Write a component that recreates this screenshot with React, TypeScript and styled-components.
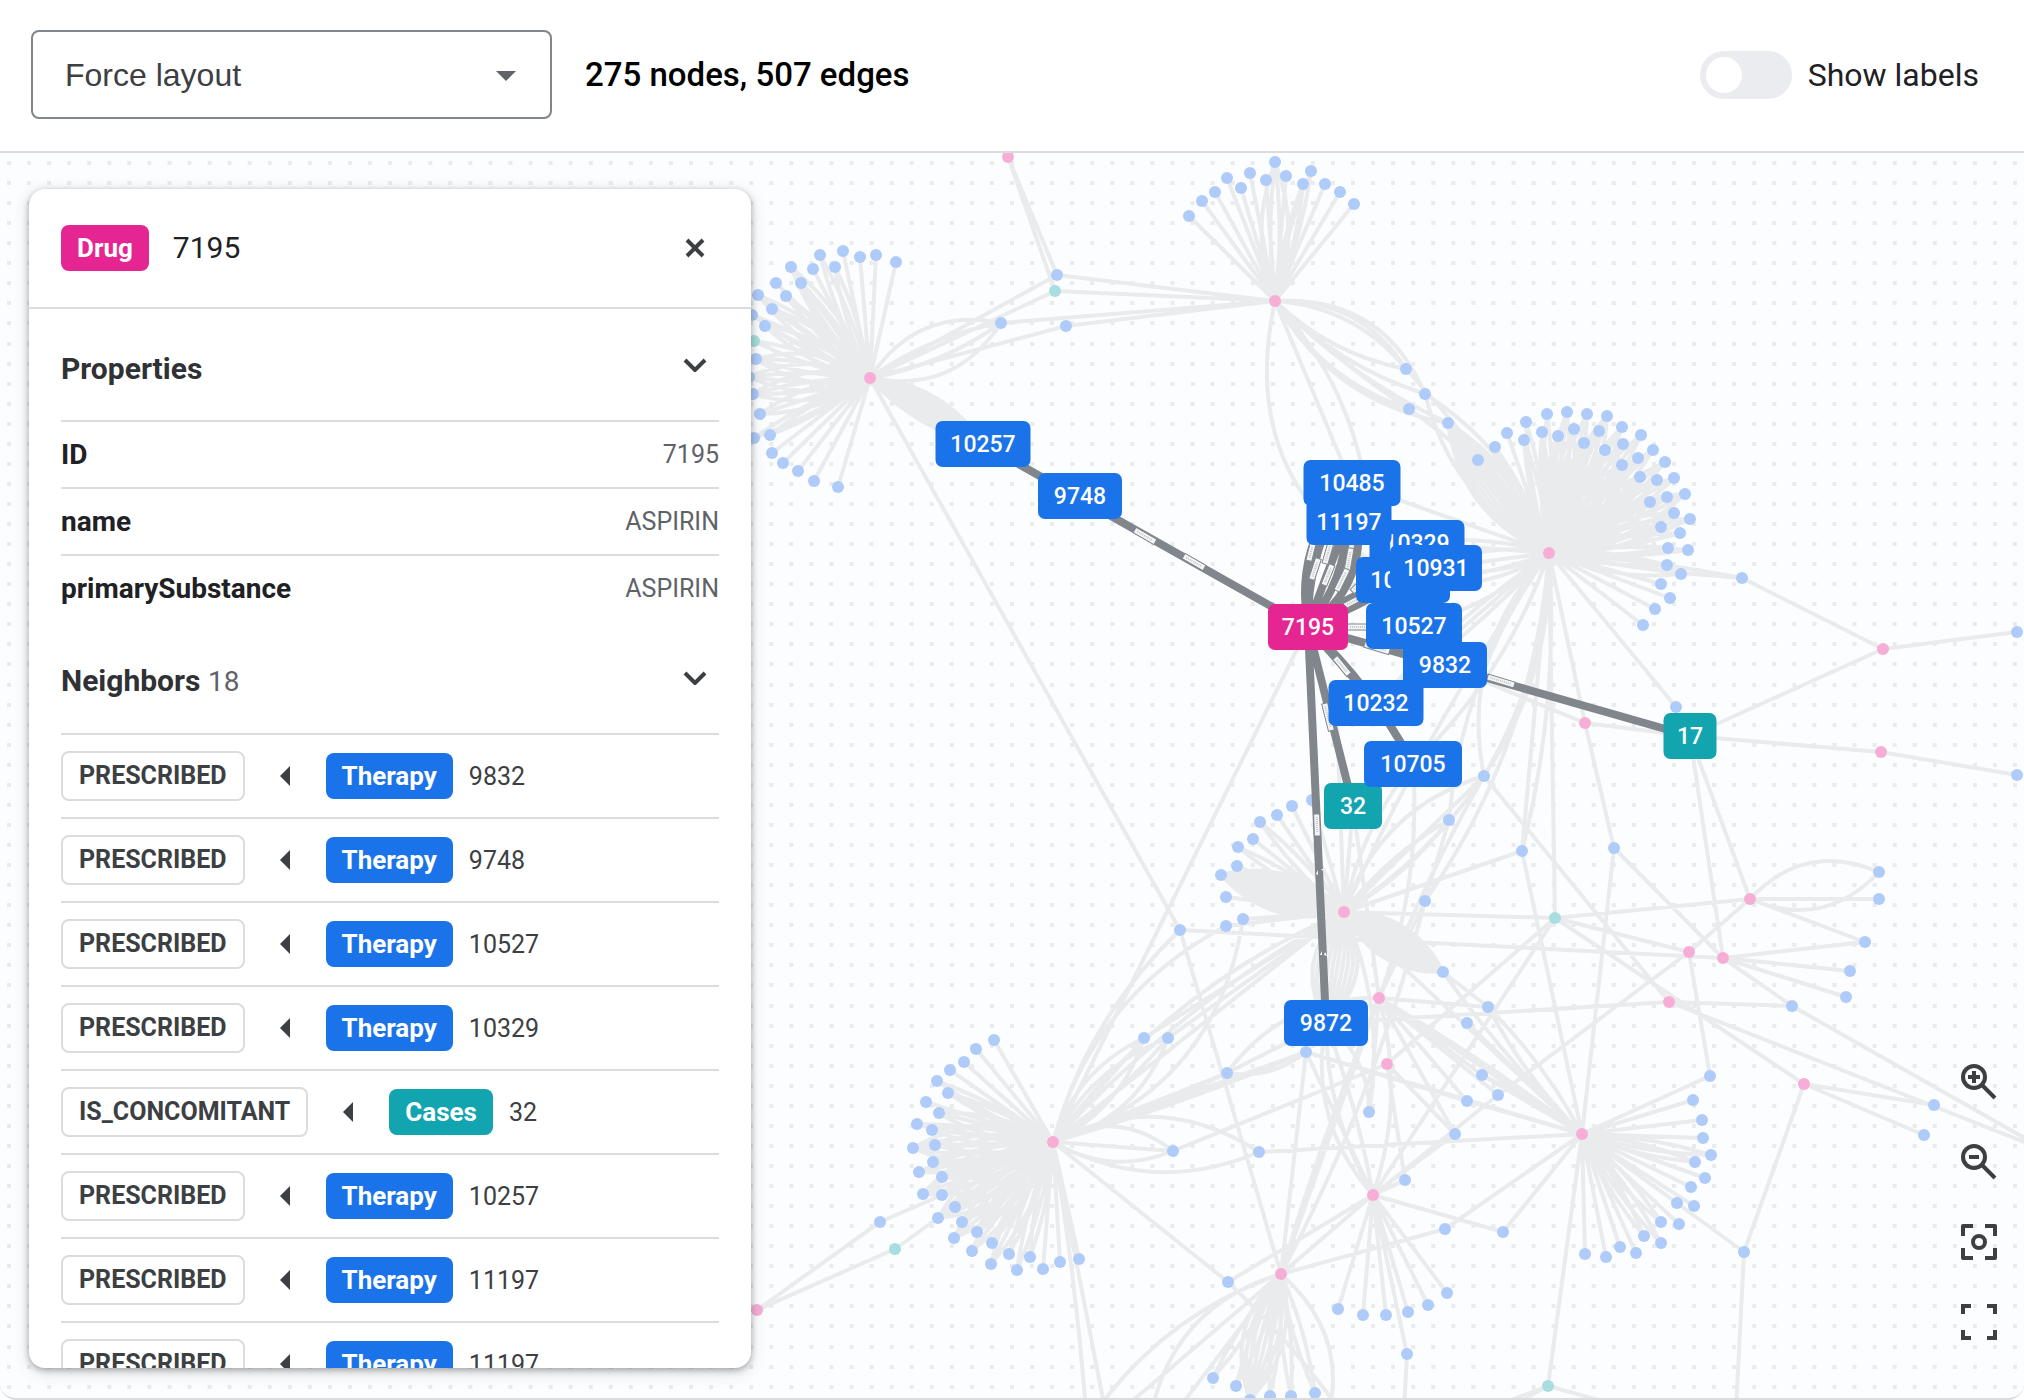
import React, { useState } from "react";
import styled, { createGlobalStyle } from "styled-components";

const GlobalStyle = createGlobalStyle`
  *, *::before, *::after { box-sizing: border-box; }
  body {
    margin: 0;
    background: #ffffff;
    color: #202124;
    font-family: Roboto, "Noto Sans", sans-serif;
  }
`;

const Page = styled.div`
  display: flex;
  flex-direction: column;
  height: 100vh;
  overflow: hidden;
`;

const Toolbar = styled.header`
  display: flex;
  align-items: center;
  gap: 33px;
  padding: 30px 45px 32px 31px;
  border-bottom: 2px solid #dadce0;
`;

const SelectBox = styled.div`
  position: relative;
  width: 521px;
`;

const LayoutSelect = styled.select`
  appearance: none;
  display: block;
  width: 100%;
  height: 89px;
  padding: 0 64px 0 32px;
  border: 2px solid #80868b;
  border-radius: 8px;
  background: #ffffff;
  color: #3c4043;
  font-family: "Liberation Sans", Arial, sans-serif;
  font-size: 32px;
`;

const SelectArrow = styled.svg`
  position: absolute;
  right: 36px;
  top: 41px;
  pointer-events: none;
`;

const Counts = styled.p`
  flex: 1;
  margin: 0;
  color: #000000;
  font-size: 33px;
  font-weight: 500;
  line-height: 40px;
`;

const SwitchLabel = styled.label`
  display: flex;
  align-items: center;
  gap: 16px;
  font-size: 32px;
  line-height: 40px;
`;

const Switch = styled.input`
  appearance: none;
  display: flex;
  align-items: center;
  width: 92px;
  height: 48px;
  margin: 0;
  padding: 6px;
  border-radius: 24px;
  background: #ebecf0;

  &::before {
    content: "";
    width: 36px;
    height: 36px;
    border-radius: 50%;
    background: #ffffff;
  }

  &:checked {
    justify-content: flex-end;
    background: #1a73e8;
  }
`;

const Canvas = styled.main`
  position: relative;
  flex: 1;
  min-height: 0;
  overflow: hidden;
  border-bottom: 2px solid #dadce0;
  border-radius: 0 0 16px 16px;
  background: #fcfdff;
`;

const GraphSvg = styled.svg`
  display: block;
  width: 100%;
  height: 100%;

  text {
    fill: #ffffff;
    font-size: 23px;
    font-weight: 500;
    text-anchor: middle;
  }
`;

const Panel = styled.aside`
  position: absolute;
  top: 36px;
  bottom: 30px;
  left: 29px;
  width: 722px;
  overflow: hidden;
  border-radius: 16px;
  background: #ffffff;
  box-shadow: 0 2px 6px rgba(60, 64, 67, 0.4), 0 4px 16px rgba(60, 64, 67, 0.18);
`;

const PanelHeader = styled.div`
  display: flex;
  align-items: center;
  gap: 24px;
  height: 120px;
  padding: 0 32px;
  border-bottom: 2px solid #dadce0;
`;

const PanelTitle = styled.h1`
  flex: 1;
  margin: 0;
  font-size: 30px;
  font-weight: 400;
  line-height: 40px;
`;

const IconButton = styled.button`
  display: flex;
  align-items: center;
  justify-content: center;
  width: 48px;
  height: 48px;
  padding: 0;
  border: 0;
  background: none;
  color: #3c4043;
`;

const PanelBody = styled.div`
  padding: 0 32px;
`;

const SectionToggle = styled.button`
  display: flex;
  align-items: center;
  justify-content: space-between;
  width: 100%;
  height: 111px;
  padding: 0 12px 0 0;
  border: 0;
  background: none;
  color: #303134;
  font-family: inherit;
  font-size: 30px;
  font-weight: 700;
  line-height: 36px;
`;

const SectionTitle = styled.span`
  padding-top: 8px;
`;

const Count = styled.span`
  color: #5f6368;
  font-size: 28px;
  font-weight: 400;
`;

const PropertyTable = styled.table`
  width: 100%;
  border-collapse: collapse;
  font-size: 28px;
  line-height: 32px;
`;

const PropertyRow = styled.tr`
  height: 67px;
  border-top: 2px solid #dadce0;
`;

const PropertyName = styled.th`
  padding: 0;
  text-align: left;
  font-weight: 700;
`;

const PropertyValue = styled.td`
  padding: 0;
  color: #5f6368;
  font-size: 25px;
  text-align: right;
`;

const NeighborList = styled.ul`
  margin: 0;
  padding: 0;
  list-style: none;
`;

const NeighborRow = styled.li`
  display: flex;
  align-items: center;
  height: 84px;
  border-top: 2px solid #dadce0;
  color: #3c4043;
  font-size: 25px;
`;

const EdgeChip = styled.span`
  padding: 0 16px;
  border: 2px solid #dadce0;
  border-radius: 8px;
  font-size: 25px;
  font-weight: 700;
  line-height: 46px;
`;

const DirectionArrow = styled.svg`
  margin: 0 36px 0 35px;
`;

const Badge = styled.span<{ $tone: Tone }>`
  padding: 0 16px;
  border-radius: 8px;
  background: ${(p) => TONES[p.$tone].solid};
  color: #ffffff;
  font-size: 26px;
  font-weight: 700;
  line-height: 46px;
`;

const NeighborId = styled.span`
  margin-left: 16px;
`;

const Controls = styled.div`
  position: absolute;
  right: 21px;
  bottom: 52px;
  display: flex;
  flex-direction: column;
  gap: 32px;
`;

type Tone = "drug" | "therapy" | "cases";
type Point = [number, number];
type Leaf = [number, number, number?];

const TONES: Record<Tone, { solid: string; faded: string }> = {
  drug: { solid: "#e52592", faded: "#f7aed6" },
  therapy: { solid: "#1a73e8", faded: "#aecbfa" },
  cases: { solid: "#12a4af", faded: "#a8dee0" },
};

/* Hubs of the graph. */
const H1: Point = [870, 378];
const H2: Point = [1275, 301];
const H3: Point = [1549, 553];
const H4: Point = [1053, 1142];
const H5: Point = [1582, 1134];
const P1: Point = [1344, 912];
const P2: Point = [1379, 998];
const P3: Point = [1387, 1064];
const P4: Point = [1373, 1195];
const P5: Point = [1281, 1274];

/* Leaves around a hub; the third value is the number of parallel edges. */
const FANS: { hub: Point; leaves: Leaf[] }[] = [
  {
    hub: H2,
    leaves: [
      [1189, 216], [1202, 201], [1215, 192], [1227, 178], [1241, 188], [1250, 173], [1266, 180],
      [1275, 162, 4], [1286, 176], [1303, 184, 2], [1311, 171, 2], [1325, 184], [1340, 192], [1354, 204],
    ],
  },
  {
    hub: H1,
    leaves: [
      [896, 262], [876, 255], [860, 257], [843, 251], [835, 267, 2], [820, 255, 2], [813, 269], [801, 283, 2],
      [791, 267, 3], [786, 296, 2], [776, 283], [772, 309, 3], [758, 295, 3], [765, 326, 3], [752, 315, 2],
      [756, 359, 4], [749, 377, 4], [753, 394, 4], [760, 414, 3], [770, 435, 2], [754, 438, 2],
      [772, 453], [783, 463], [798, 471], [814, 481], [838, 487],
    ],
  },
  {
    hub: H3,
    leaves: [
      [1478, 460], [1495, 447, 2], [1507, 433], [1524, 440, 2], [1526, 422, 2], [1542, 432, 2], [1547, 414, 2],
      [1558, 436, 3], [1567, 412, 3], [1574, 429, 3], [1587, 414, 3], [1584, 443, 3], [1607, 416, 4],
      [1599, 431, 3], [1605, 450, 3], [1622, 427, 3], [1623, 444, 3], [1622, 465, 4], [1641, 435, 3],
      [1638, 458, 3], [1640, 477, 3], [1653, 450, 3], [1657, 480, 3], [1665, 462, 3], [1650, 502, 4],
      [1674, 478, 3], [1667, 497, 3], [1685, 494, 4], [1674, 513, 3], [1661, 527, 3], [1690, 519, 3],
      [1680, 533, 2], [1668, 548, 2], [1688, 550, 2], [1667, 565, 2], [1681, 574, 3], [1661, 584],
      [1670, 598], [1655, 609], [1643, 625],
    ],
  },
  {
    hub: H4,
    leaves: [
      [994, 1040], [976, 1049], [964, 1062], [950, 1070], [937, 1081, 2], [948, 1093, 2], [926, 1102],
      [939, 1113, 3], [917, 1124, 2], [932, 1130, 3], [913, 1148, 5], [935, 1145, 3], [933, 1162, 4],
      [919, 1172, 3], [942, 1177, 4], [923, 1194, 5], [942, 1195, 4], [955, 1207, 4], [938, 1218, 5],
      [962, 1222, 3], [954, 1238, 4], [977, 1232, 3], [972, 1251, 3], [992, 1243, 2], [991, 1264, 3],
      [1009, 1254, 2], [1017, 1270, 2], [1030, 1257, 2], [1043, 1269], [1060, 1262], [1079, 1259],
    ],
  },
  {
    hub: H5,
    leaves: [
      [1710, 1076], [1693, 1100], [1702, 1120], [1703, 1138], [1711, 1155, 2], [1695, 1162, 2], [1705, 1178],
      [1691, 1187], [1677, 1203], [1694, 1206], [1679, 1224], [1661, 1222, 2], [1661, 1243, 2], [1644, 1236, 2],
      [1636, 1253], [1620, 1247], [1606, 1257], [1585, 1254],
    ],
  },
  {
    hub: P1,
    leaves: [
      [1312, 800], [1292, 806], [1277, 815], [1260, 822, 2], [1253, 839], [1238, 847, 2], [1237, 866],
      [1226, 897], [1243, 919], [1226, 926],
    ],
  },
  {
    hub: P4,
    leaves: [[1338, 1309], [1363, 1315], [1386, 1315], [1408, 1312], [1428, 1305], [1447, 1293], [1407, 1354]],
  },
  {
    hub: P5,
    leaves: [[1213, 1378, 2], [1236, 1386, 2], [1270, 1396, 2], [1291, 1396, 2], [1315, 1393, 2]],
  },
];

const THERAPIES: Point[] = [
  [1057, 275], [1001, 323], [1066, 326], [1406, 369], [1425, 394], [1409, 409], [1448, 423], [1742, 578],
  [2017, 632], [2017, 775], [1676, 707], [1484, 776], [1449, 820], [1221, 875], [1180, 930], [1144, 1038],
  [1168, 1038], [1227, 1073], [1306, 1052], [1173, 1151], [1259, 1152], [1369, 1112], [1425, 901],
  [1443, 972], [1488, 1007], [1467, 1023], [1482, 1075], [1498, 1095], [1467, 1101], [1455, 1134],
  [1522, 851], [1614, 848], [1879, 872], [1879, 899], [1865, 942], [1850, 971], [1846, 997], [1792, 1006],
  [1934, 1105], [1924, 1135], [1744, 1252], [1405, 1180], [1445, 1229], [1503, 1232], [1228, 1282],
  [1250, 1400], [880, 1222],
];

const DRUGS: Point[] = [
  H1, H2, H3, H4, H5, P1, P2, P3, P4, P5,
  [1008, 157], [1883, 649], [1881, 752], [1585, 723], [1750, 899], [1689, 952], [1723, 958], [1669, 1002],
  [1804, 1084], [757, 1310],
];

const CASES: Point[] = [[1055, 291], [754, 341], [1555, 918], [1548, 1386], [895, 1249]];

/* Single edges: start, end, and the sideways pull of the curve. */
const LINKS: [Point, Point, number?][] = [
  [[1008, 157], [1057, 275]], [[1008, 157], [1055, 291]], [[1057, 275], H2], [[1055, 291], H2],
  [[1001, 323], H2], [[1066, 326], H2], [H1, [1057, 275]], [H1, [1055, 291]], [H1, [1066, 326]],
  [H1, [1001, 323], -48], [H1, [1001, 323], -16], [H1, [1001, 323], 16], [H1, [1001, 323], 48],
  [H1, [754, 341], 10], [H1, [754, 341], -10], [H1, [1180, 930]],
  [H2, [1406, 369], -42], [H2, [1406, 369], -32], [H2, [1425, 394], -62], [H2, [1425, 394], 22],
  [H2, [1406, 369], 22], [H2, [1409, 409], 8], [H2, [1409, 409], 32], [H2, [1448, 423], 50], [H2, [1448, 423], 20],
  [H2, [1351, 483]], [H2, [1368, 500], -34], [H2, [1403, 580], 116],
  [[1406, 369], H3, -10], [[1425, 394], H3, -36], [[1425, 394], H3, 44], [[1409, 409], H3, -20],
  [H3, [1351, 483]], [H3, [1417, 543]], [H3, [1417, 543], 14], [H3, [1435, 568]], [H3, [1435, 568], 20],
  [H3, [1435, 568], -20], [H3, [1403, 580], -14], [H3, [1403, 580], -30], [H3, [1414, 626], -20],
  [H3, [1376, 703], -12], [H3, [1376, 703]], [H3, [1376, 703], 12], [H3, [1413, 764], -30],
  [H3, [1484, 776], 60], [H3, [1484, 776], -30], [H3, [1484, 776], -38], [H3, [1449, 820], 40], [H3, P1, 20],
  [H3, [1425, 901], -50], [H3, [1522, 851]], [H3, [1522, 851], -24], [H3, [1555, 918]], [H3, [1585, 723]],
  [H3, [1676, 707]], [H3, [1742, 578], -6], [H3, [1742, 578], 6],
  [[1742, 578], [1883, 649]], [[1883, 649], [2017, 632]], [[1690, 736], [1883, 649]],
  [[1690, 736], [1881, 752]], [[1881, 752], [2017, 775]], [[1690, 736], [1585, 723]],
  [[1585, 723], [1445, 665]], [[1585, 723], [1614, 848]], [[1690, 736], [1723, 958]], [[1690, 736], [1750, 899]],
  [[1484, 776], P1], [[1484, 776], P1, 50], [[1484, 776], P1, -20], [[1484, 776], [1669, 1002]],
  [[1449, 820], P1, -14], [[1449, 820], P1, 14], [[1449, 820], [1425, 901]], [[1522, 851], P1],
  [[1522, 851], H5], [[1614, 848], H5], [[1614, 848], [1723, 958]], [[1484, 776], P2, 10],
  [[1425, 901], P2], [P1, [1555, 918]], [[1555, 918], [1750, 899]], [[1555, 918], [1689, 952]],
  [[1555, 918], [1804, 1084]], [[1555, 918], P3], [[1555, 918], P4], [[1180, 930], [1723, 958]],
  [[1180, 930], H4, 34], [[1180, 930], P5], [[1308, 627], H4], [[1353, 806], P1], [[1353, 806], P2],
  [[1413, 764], P2, -26], [[1413, 764], P1, 20], [[1337, 720], P1],
  [[1750, 899], [1879, 872], -46], [[1750, 899], [1879, 872], 46], [[1750, 899], [1879, 899]],
  [[1750, 899], [1865, 942]], [[1723, 958], [1865, 942]], [[1723, 958], [1850, 971]],
  [[1723, 958], [1846, 997]], [[1723, 958], [1792, 1006]], [[1792, 1006], [2060, 1158]],
  [[1669, 1002], [1792, 1006]], [[1669, 1002], [2060, 1156]], [[1669, 1002], [1326, 1023]],
  [[1750, 899], [1689, 952]], [[1689, 952], [1498, 1095]], [[1498, 1095], P4], [[1689, 952], [1710, 1076]],
  [[1804, 1084], [1934, 1105]], [[1804, 1084], [1924, 1135]], [[1804, 1084], [1744, 1252]],
  [[1744, 1252], H5], [[1744, 1252], [1736, 1410]], [H5, [1548, 1386]],
  [[1548, 1386], [1480, 1412]], [[1548, 1386], [1500, 1412]], [[1548, 1386], [1620, 1406]],
  [H5, [1259, 1152]], [H5, [1467, 1101]], [[1306, 1052], [1467, 1101]], [H5, [1306, 1052]],
  [H5, [1482, 1075]], [H5, [1482, 1075], 6], [H5, [1488, 1007], -12], [H5, [1488, 1007], 12], [H5, [1467, 1023]],
  [H5, [1443, 972], -10], [H5, P2], [H5, P2, 8], [H5, P1], [H5, [1445, 1229]], [H5, [1503, 1232]],
  [P2, [1488, 1007]], [P2, [1467, 1101]], [P2, [1482, 1075]], [P2, [1498, 1095]], [P2, [1455, 1134]],
  [P2, [1369, 1112]], [P2, P5], [P2, P5, 8], [P2, [1227, 1073], 44], [P1, [1369, 1112], -30],
  [[1443, 972], [1488, 1007]], [[1425, 901], P5, -24], [[1326, 1023], P4, 24], [[1326, 1023], P4, -8],
  [[1326, 1023], P4, 44], [[1306, 1052], P4], [P2, P4, -30], [[1326, 1023], [1369, 1112], -24],
  [[1455, 1134], P4], [P4, [1228, 1282]], [P4, P5], [P4, [1503, 1232]], [P4, [1405, 1180]],
  [[1407, 1354], [1404, 1410]], [P3, [1173, 1151]], [P3, [1405, 1180]], [P3, [1455, 1134]],
  [[1306, 1052], P5], [[1227, 1073], [1306, 1052], 18], [[1227, 1073], [1326, 1023]], [H4, [1227, 1073]],
  [H4, [1227, 1073], 8], [H4, [1306, 1052]], [H4, [1306, 1052], 8], [H4, P1, -30], [H4, P1, -50],
  [H4, [1173, 1151], -40], [H4, [1173, 1151]], [H4, [1173, 1151], 30], [H4, [1259, 1152], -60],
  [H4, [1259, 1152], 50], [H4, [1144, 1038], -30], [H4, [1144, 1038]], [H4, [1144, 1038], 30],
  [H4, [1168, 1038], -30], [H4, [1168, 1038], 40], [H4, [1168, 1038], 10], [H4, [1228, 1282]],
  [H4, [1243, 919], 90], [H4, [1226, 926], -60], [H4, P1, 0], [H4, [1086, 1410], -6], [H4, [1107, 1420]],
  [[1144, 1038], P1], [[1168, 1038], P1], [[942, 1195], [880, 1222]], [[880, 1222], [757, 1310]],
  [[895, 1249], [757, 1310]], [[895, 1249], [938, 1218]], [[1228, 1282], [1340, 1410], -8],
  [P5, [1445, 1229]], [P5, [1090, 1420], 40], [P5, [1110, 1420]], [P5, [1150, 1420], 60], [P5, [1170, 1420]],
  [P5, [1320, 1440], -60],
];

/* Thick strands of many parallel edges: start, end, first pull, last pull, count. */
const STRANDS: [Point, Point, number, number, number][] = [
  [H1, [983, 444], -32, 22, 9],
  [[1448, 423], H3, -30, 48, 10],
  [P1, [1221, 875], -38, 38, 18],
  [P1, [1443, 972], -36, 36, 18],
  [P1, [1326, 1023], -44, 44, 10],
  [P5, [1250, 1400], -36, 44, 8],
];

const CENTER: Point = [1308, 627];

const SELECTED_LINKS: [Point, Point, number?][] = [
  [CENTER, [983, 444]], [CENTER, [1690, 736]], [CENTER, [1326, 1023]], [CENTER, [1353, 806]],
  [CENTER, [1413, 764], -14], [CENTER, [1376, 703]], [CENTER, [1445, 665]],
  [CENTER, [1351, 483], -38], [CENTER, [1351, 483], -24], [CENTER, [1348, 522], -2],
  [CENTER, [1348, 522], 18], [CENTER, [1358, 522], 34], [CENTER, [1403, 580], -14], [CENTER, [1403, 580], 4],
];

/* Small white plates along the selected edges: centre, angle, length. */
const PLATES: [number, number, number, number][] = [
  [1145, 536, 30, 24], [1194, 562, 30, 24], [1317, 825, 88, 22], [1328, 717, 76, 28], [1342, 666, 51, 22],
  [1358, 627, 0, 22], [1377, 648, 17, 26], [1501, 681, 17, 28], [1311, 552, -76, 18], [1315, 569, -72, 22],
  [1328, 553, -74, 22], [1328, 575, -68, 22], [1349, 560, -80, 24], [1342, 580, -64, 24], [1356, 600, -28, 26],
  [1358, 586, -44, 16],
];

const LABELS: { id: string; x: number; y: number; w: number; tone: Tone }[] = [
  { id: "10257", x: 983, y: 444, w: 95, tone: "therapy" },
  { id: "9748", x: 1080, y: 496, w: 84, tone: "therapy" },
  { id: "7195", x: 1308, y: 627, w: 80, tone: "drug" },
  { id: "10485", x: 1352, y: 483, w: 97, tone: "therapy" },
  { id: "10329", x: 1417, y: 543, w: 95, tone: "therapy" },
  { id: "11197", x: 1349, y: 522, w: 85, tone: "therapy" },
  { id: "10257", x: 1403, y: 580, w: 94, tone: "therapy" },
  { id: "10931", x: 1436, y: 568, w: 92, tone: "therapy" },
  { id: "10527", x: 1414, y: 626, w: 96, tone: "therapy" },
  { id: "9832", x: 1445, y: 665, w: 84, tone: "therapy" },
  { id: "10232", x: 1376, y: 703, w: 95, tone: "therapy" },
  { id: "32", x: 1353, y: 806, w: 58, tone: "cases" },
  { id: "10705", x: 1413, y: 764, w: 98, tone: "therapy" },
  { id: "17", x: 1690, y: 736, w: 53, tone: "cases" },
  { id: "9872", x: 1326, y: 1023, w: 84, tone: "therapy" },
];

const NEIGHBORS: { edge: string; label: string; tone: Tone; id: string }[] = [
  { edge: "PRESCRIBED", label: "Therapy", tone: "therapy", id: "9832" },
  { edge: "PRESCRIBED", label: "Therapy", tone: "therapy", id: "9748" },
  { edge: "PRESCRIBED", label: "Therapy", tone: "therapy", id: "10527" },
  { edge: "PRESCRIBED", label: "Therapy", tone: "therapy", id: "10329" },
  { edge: "IS_CONCOMITANT", label: "Cases", tone: "cases", id: "32" },
  { edge: "PRESCRIBED", label: "Therapy", tone: "therapy", id: "10257" },
  { edge: "PRESCRIBED", label: "Therapy", tone: "therapy", id: "11197" },
  { edge: "PRESCRIBED", label: "Therapy", tone: "therapy", id: "11197" },
];

const PROPERTIES: [string, string][] = [
  ["ID", "7195"],
  ["name", "ASPIRIN"],
  ["primarySubstance", "ASPIRIN"],
];

/* Spacing of the dotted backdrop. */
const GRID_STEP = 20.06;
const GRID_ROWS = Array.from({ length: 120 }, (_, i) => Math.round(10 + i * GRID_STEP));

/* A quadratic curve between two points, pulled sideways at its middle. */
function curve([ax, ay]: Point, [bx, by]: Point, pull = 0) {
  const length = Math.hypot(bx - ax, by - ay) || 1;
  const cx = (ax + bx) / 2 - ((by - ay) / length) * pull;
  const cy = (ay + by) / 2 + ((bx - ax) / length) * pull;
  return `M${ax} ${ay}Q${cx.toFixed(1)} ${cy.toFixed(1)} ${bx} ${by}`;
}

function strand(a: Point, b: Point, from: number, to: number, count: number) {
  return Array.from({ length: count }, (_, i) =>
    curve(a, b, count === 1 ? 0 : from + ((to - from) * i) / (count - 1)),
  ).join("");
}

const FADED_PATH = [
  ...FANS.flatMap(({ hub, leaves }) =>
    leaves.map(([x, y, n = 1]) => strand(hub, [x, y], -9 * (n - 1), 9 * (n - 1), n)),
  ),
  ...LINKS.map(([a, b, pull]) => curve(a, b, pull)),
  ...STRANDS.map(([a, b, from, to, count]) => strand(a, b, from, to, count)),
].join("");

const SELECTED_PATH = SELECTED_LINKS.map(([a, b, pull]) => curve(a, b, pull)).join("");

function Dots({ points, tone }: { points: Point[]; tone: Tone }) {
  return (
    <g fill={TONES[tone].faded}>
      {points.map(([x, y]) => (
        <circle key={`${x}-${y}`} cx={x} cy={y} r={6} />
      ))}
    </g>
  );
}

function Graph() {
  const leaves = FANS.flatMap((fan) => fan.leaves.map(([x, y]): Point => [x, y]));
  return (
    <GraphSvg role="img" aria-label="Graph of 275 nodes and 507 edges">
      <g stroke="#e9ebed" strokeWidth={4} strokeDasharray={`4 ${GRID_STEP - 4}`}>
        {GRID_ROWS.map((y) => (
          <line key={y} x1={7} x2="100%" y1={y} y2={y} />
        ))}
      </g>
      <g transform="translate(0 -153)">
        <path d={FADED_PATH} fill="none" stroke="#eaebed" strokeWidth={4} />
        <Dots points={[...leaves, ...THERAPIES]} tone="therapy" />
        <Dots points={CASES} tone="cases" />
        <Dots points={DRUGS} tone="drug" />
        <path d={SELECTED_PATH} fill="none" stroke="#80868b" strokeWidth={8} />
        {PLATES.map(([x, y, angle, length]) => (
          <g key={`${x}-${y}`} transform={`translate(${x} ${y}) rotate(${angle})`}>
            <rect x={-length / 2} y={-3} width={length} height={6} fill="#f4f5f6" stroke="#80868b" strokeWidth={1} />
            <line x1={-length / 2 + 3} x2={length / 2 - 3} y1={0} y2={0} stroke="#c4c7ca" strokeWidth={2} strokeDasharray="1 1" />
          </g>
        ))}
        <path d="M1316 874l2 -4v5zM1321 869l2 0v2zM1320 955l2 -4v4zM1324 955l1 -3 2 4z" fill="#ffffff" />
        {LABELS.map(({ id, x, y, w, tone }) => (
          <g key={`${id}-${x}`}>
            <rect x={x - w / 2} y={y - 23} width={w} height={46} rx={7} fill={TONES[tone].solid} />
            <text x={x} y={y + 8}>{id}</text>
          </g>
        ))}
      </g>
    </GraphSvg>
  );
}

function Chevron() {
  return (
    <svg width="24" height="14" viewBox="0 0 24 14" fill="none" stroke="#3c4043" strokeWidth={4} aria-hidden="true">
      <path d="M2 2l10 10L22 2" />
    </svg>
  );
}

function Glyph({ children }: { children: React.ReactNode }) {
  return (
    <svg width="48" height="48" viewBox="0 0 48 48" fill="none" stroke="currentColor" strokeWidth={4} aria-hidden="true">
      {children}
    </svg>
  );
}

export default function App() {
  const [showLabels, setShowLabels] = useState(false);
  return (
    <>
      <GlobalStyle />
      <Page>
        <Toolbar>
          <SelectBox>
            <LayoutSelect aria-label="Layout" defaultValue="force">
              <option value="force">Force layout</option>
            </LayoutSelect>
            <SelectArrow width="20" height="10" viewBox="0 0 20 10" aria-hidden="true">
              <path d="M0 0h20L10 10z" fill="#5f6368" />
            </SelectArrow>
          </SelectBox>
          <Counts>275 nodes, 507 edges</Counts>
          <SwitchLabel>
            <Switch
              type="checkbox"
              role="switch"
              checked={showLabels}
              onChange={(e) => setShowLabels(e.target.checked)}
            />
            Show labels
          </SwitchLabel>
        </Toolbar>
        <Canvas>
          <Graph />
          <Panel>
            <PanelHeader>
              <Badge $tone="drug">Drug</Badge>
              <PanelTitle>7195</PanelTitle>
              <IconButton aria-label="Close">
                <svg width="20" height="20" viewBox="0 0 20 20" stroke="currentColor" strokeWidth={4} aria-hidden="true">
                  <path d="M2 2l16 16M18 2L2 18" />
                </svg>
              </IconButton>
            </PanelHeader>
            <PanelBody>
              <SectionToggle aria-expanded="true">
                <SectionTitle>Properties</SectionTitle>
                <Chevron />
              </SectionToggle>
              <PropertyTable>
                <tbody>
                  {PROPERTIES.map(([name, value]) => (
                    <PropertyRow key={name}>
                      <PropertyName scope="row">{name}</PropertyName>
                      <PropertyValue>{value}</PropertyValue>
                    </PropertyRow>
                  ))}
                </tbody>
              </PropertyTable>
              <SectionToggle aria-expanded="true">
                <SectionTitle>
                  Neighbors <Count>18</Count>
                </SectionTitle>
                <Chevron />
              </SectionToggle>
              <NeighborList>
                {NEIGHBORS.map(({ edge, label, tone, id }, i) => (
                  <NeighborRow key={i}>
                    <EdgeChip>{edge}</EdgeChip>
                    <DirectionArrow width="10" height="20" viewBox="0 0 10 20" aria-hidden="true">
                      <path d="M10 0v20L0 10z" fill="#3c4043" />
                    </DirectionArrow>
                    <Badge $tone={tone}>{label}</Badge>
                    <NeighborId>{id}</NeighborId>
                  </NeighborRow>
                ))}
              </NeighborList>
            </PanelBody>
          </Panel>
          <Controls>
            <IconButton aria-label="Zoom in">
              <Glyph>
                <circle cx="19" cy="19" r="11" />
                <path d="M27 27l13 13M13 19h12M19 13v12" />
              </Glyph>
            </IconButton>
            <IconButton aria-label="Zoom out">
              <Glyph>
                <circle cx="19" cy="19" r="11" />
                <path d="M27 27l13 13M14 19h10" />
              </Glyph>
            </IconButton>
            <IconButton aria-label="Center graph">
              <Glyph>
                <path d="M8 18V8h10M30 8h10v10M40 30v10H30M18 40H8V30" strokeLinejoin="round" />
                <circle cx="24" cy="24" r="6" />
              </Glyph>
            </IconButton>
            <IconButton aria-label="Full screen">
              <Glyph>
                <path d="M8 16V8h8M32 8h8v8M40 32v8h-8M16 40H8v-8" />
              </Glyph>
            </IconButton>
          </Controls>
        </Canvas>
      </Page>
    </>
  );
}
